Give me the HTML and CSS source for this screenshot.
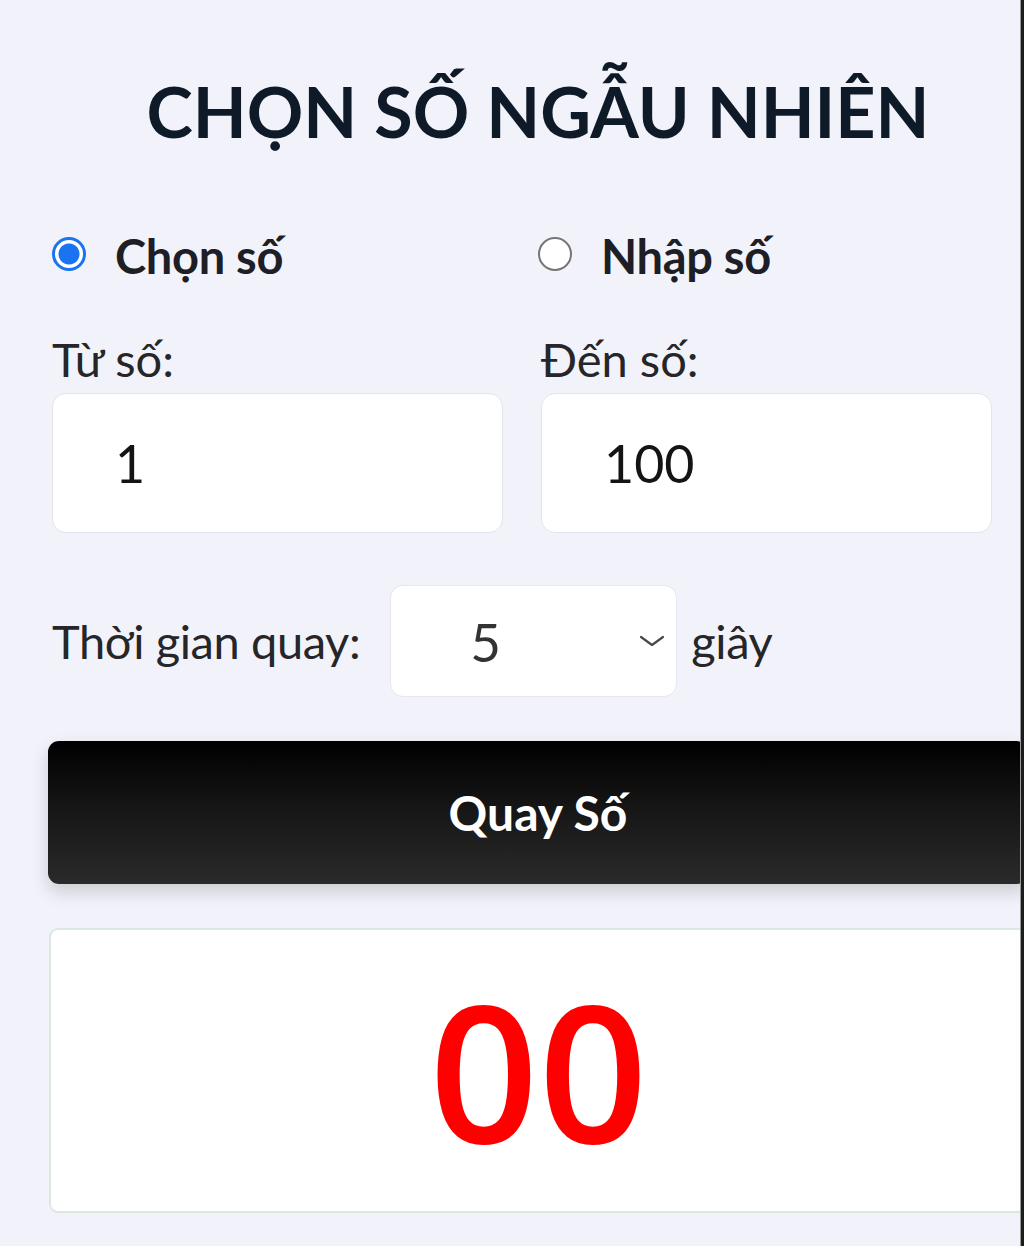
FILE: index.html
```html
<!DOCTYPE html>
<html lang="vi">
<head>
<meta charset="utf-8">
<title>Chọn số ngẫu nhiên</title>
<link rel="stylesheet" href="styles.css">
</head>
<body>
<div class="page">
  <h1 class="title">CHỌN SỐ NGẪU NHIÊN</h1>

  <div class="mode-row">
    <label class="mode">
      <input type="radio" name="mode" class="radio" checked>
      <span class="mode-text">Chọn số</span>
    </label>
    <label class="mode">
      <input type="radio" name="mode" class="radio">
      <span class="mode-text">Nhập số</span>
    </label>
  </div>

  <div class="range-row">
    <div class="field">
      <div class="field-label">Từ số:</div>
      <input class="num-input" type="text" value="1">
    </div>
    <div class="field">
      <div class="field-label">Đến số:</div>
      <input class="num-input" type="text" value="100">
    </div>
  </div>

  <div class="time-row">
    <span class="field-label">Thời gian quay:</span>
    <div class="select-wrap">
      <select class="time-select">
        <option selected>5</option>
        <option>10</option>
        <option>15</option>
      </select>
      <svg class="chevron" width="26" height="12" viewBox="0 0 26 12" aria-hidden="true">
        <polyline points="2,2 13,10 24,2" fill="none" stroke="#4a4a4a" stroke-width="2.2" stroke-linecap="round" stroke-linejoin="round"/>
      </svg>
    </div>
    <span class="field-label">giây</span>
  </div>

  <button class="spin-btn" type="button">Quay Số</button>

  <div class="result">
    <span class="result-num">00</span>
  </div>
</div>
<div class="edge"></div>
</body>
</html>
```

FILE: styles.css
```css
html, body {
  margin: 0;
  padding: 0;
}
body {
  background: #f2f3fa;
  font-family: Lato, "Liberation Sans", sans-serif;
  color: #232326;
  overflow: hidden;
  width: 1024px;
  height: 1246px;
}
.page {
  width: 980px;
  margin-left: 48px;
  padding-top: 69px;
}
.title {
  margin: 0;
  text-align: center;
  font-size: 70px;
  line-height: 84px;
  font-weight: 700;
  color: #0f1a29;
  letter-spacing: 0;
}
.mode-row {
  margin-top: 74px;
  padding-left: 4px;
  display: grid;
  grid-template-columns: 486px 1fr;
  height: 58px;
}
.mode {
  display: flex;
  align-items: center;
  gap: 29px;
}
.radio {
  appearance: none;
  -webkit-appearance: none;
  margin: 0;
  width: 34px;
  height: 34px;
  border-radius: 50%;
  border: 2px solid #767676;
  background: #fff;
  box-sizing: border-box;
  position: relative;
  top: -2px;
}
.radio:checked {
  border: 3px solid #1a73f0;
  background: radial-gradient(circle, #1a73f0 0 10px, #fff 11px);
}
.mode-text {
  font-size: 47px;
  line-height: 58px;
  font-weight: 700;
  color: #1e1e26;
  letter-spacing: -0.3px;
}
.range-row {
  margin-top: 46px;
  padding-left: 4px;
  display: grid;
  grid-template-columns: 451px 451px;
  column-gap: 38px;
}
.field {
  display: flex;
  flex-direction: column;
  gap: 6px;
}
.field-label {
  font-size: 47px;
  line-height: 56px;
  color: #262629;
  white-space: nowrap;
}
.num-input {
  box-sizing: border-box;
  width: 100%;
  height: 140px;
  margin: 0;
  padding: 0 0 0 62px;
  border: 1px solid #e3e4ea;
  border-radius: 14px;
  background: #fff;
  font-family: Lato, "Liberation Sans", sans-serif;
  font-size: 52px;
  color: #141414;
  outline: none;
}
.time-row {
  margin-top: 52px;
  padding-left: 4px;
  display: flex;
  align-items: center;
  height: 112px;
}
.time-row .field-label {
  letter-spacing: -0.4px;
}
.select-wrap {
  position: relative;
  margin-left: 30px;
  margin-right: 14px;
  width: 287px;
  height: 112px;
}
.time-select {
  appearance: none;
  -webkit-appearance: none;
  box-sizing: border-box;
  width: 100%;
  height: 100%;
  margin: 0;
  padding: 0 0 0 79px;
  border: 1px solid #e6e7ed;
  border-radius: 13px;
  background: #fff;
  font-family: Lato, "Liberation Sans", sans-serif;
  font-size: 53px;
  color: #333;
  outline: none;
}
.chevron {
  position: absolute;
  right: 12px;
  top: 50px;
  pointer-events: none;
}
.spin-btn {
  display: block;
  box-sizing: border-box;
  width: 980px;
  height: 143px;
  margin: 44px 0 0 0;
  padding: 0;
  border: none;
  border-radius: 11px;
  background: linear-gradient(to bottom, #000000 0%, #151515 45%, #2a2a2a 100%);
  box-shadow: 0 8px 18px rgba(0, 0, 0, 0.16);
  color: #fff;
  font-family: Lato, "Liberation Sans", sans-serif;
  font-size: 48px;
  font-weight: 700;
}
.result {
  margin-top: 44px;
  margin-left: 1px;
  box-sizing: border-box;
  height: 285px;
  background: #fff;
  border: 2px solid #dbe8e1;
  border-radius: 9px;
  display: flex;
  align-items: center;
  justify-content: center;
}
.result-num {
  font-family: "Open Sans", "Liberation Sans", sans-serif;
  font-weight: 600;
  font-size: 191px;
  line-height: 1;
  color: #ff0000;
  position: relative;
  top: -1px;
}
.edge {
  position: fixed;
  top: 0;
  right: 0;
  bottom: 0;
  width: 3px;
  background: #1c1c1c;
  border-left: 1px solid #9a9a9a;
}
```
